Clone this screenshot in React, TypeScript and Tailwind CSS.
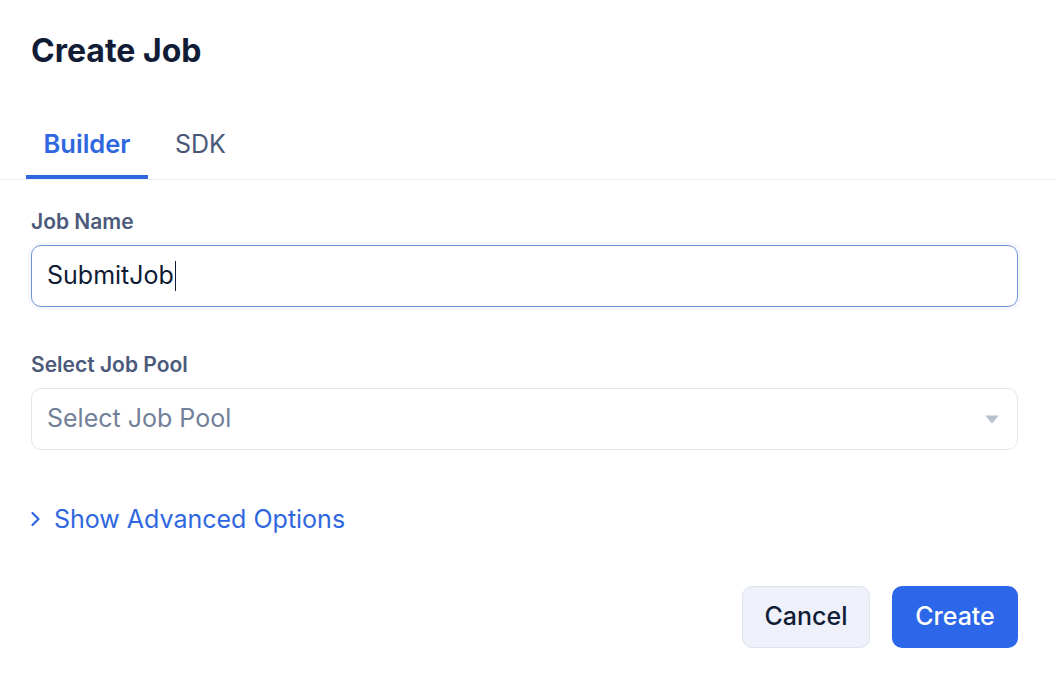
import React from "react";

export default function App() {
  return (
    <div className="w-[1056px] h-[686px] bg-white text-[#0f1b35]" style={{ fontFamily: "Inter, 'Noto Sans', sans-serif" }}>
      <div className="px-[31px] pt-[31px]">
        <h1 className="text-[32px] leading-[40px] font-bold text-[#111c36]">Create Job</h1>
      </div>
      <div className="mt-[39px] flex border-b border-[#eef0f4] pl-[26px]">
        <div className="w-[122px] flex flex-col items-center pt-[17px]">
          <span className="text-[25.5px] leading-[34px] font-semibold text-[#2f67e0]">Builder</span>
          <div className="mt-[14px] h-[4px] w-full bg-[#2f67e0]" />
        </div>
        <div className="ml-[27px] flex items-start pt-[17px]">
          <span className="text-[25px] leading-[34px] font-normal text-[#4a5878]">SDK</span>
        </div>
      </div>
      <div className="px-[31px] pt-[28px] pr-[38px]">
        <label className="block text-[21px] leading-[28px] font-semibold text-[#4b5a7a]">Job Name</label>
        <div className="mt-[9px] h-[62px] rounded-[10px] border border-[#6f93d8] flex items-center px-[15px] shadow-[0_0_0_3px_rgba(230,236,248,0.35)]">
          <span className="text-[25px] text-[#0f1b35]">SubmitJob</span>
          <span className="w-[1.5px] h-[30px] bg-[#0f1b35] ml-[1px]" />
        </div>
        <label className="block mt-[44px] text-[21px] leading-[28px] font-semibold text-[#4b5a7a]">Select Job Pool</label>
        <div className="mt-[9px] h-[62px] rounded-[10px] border border-[#e1e6ef] flex items-center px-[15px] justify-between">
          <span className="text-[25px] text-[#73809a]">Select Job Pool</span>
          <svg width="16" height="10" viewBox="0 0 16 10" className="mr-[2px]">
            <path d="M1.5 1.5 H14.5 L9 8.5 Q8 9.5 7 8.5 Z" fill="#b9c0d0" />
          </svg>
        </div>
        <div className="mt-[52px] flex items-center gap-[13px] text-[#2f67e0]">
          <svg width="10" height="18" viewBox="0 0 10 18" fill="none">
            <path d="M1.5 3 L7.5 9 L1.5 15" stroke="#2f67e0" strokeWidth="2.2" strokeLinecap="round" strokeLinejoin="round" />
          </svg>
          <span className="text-[25px] leading-[34px]">Show Advanced Options</span>
        </div>
        <div className="mt-[50px] flex justify-end gap-[22px]">
          <button className="h-[62px] w-[128px] rounded-[10px] bg-[#eef1fa] border border-[#dde3ef] text-[25px] font-medium text-[#111c36]">Cancel</button>
          <button className="h-[62px] w-[126px] rounded-[10px] bg-[#2b67e8] text-[25px] font-medium text-white">Create</button>
        </div>
      </div>
    </div>
  );
}
